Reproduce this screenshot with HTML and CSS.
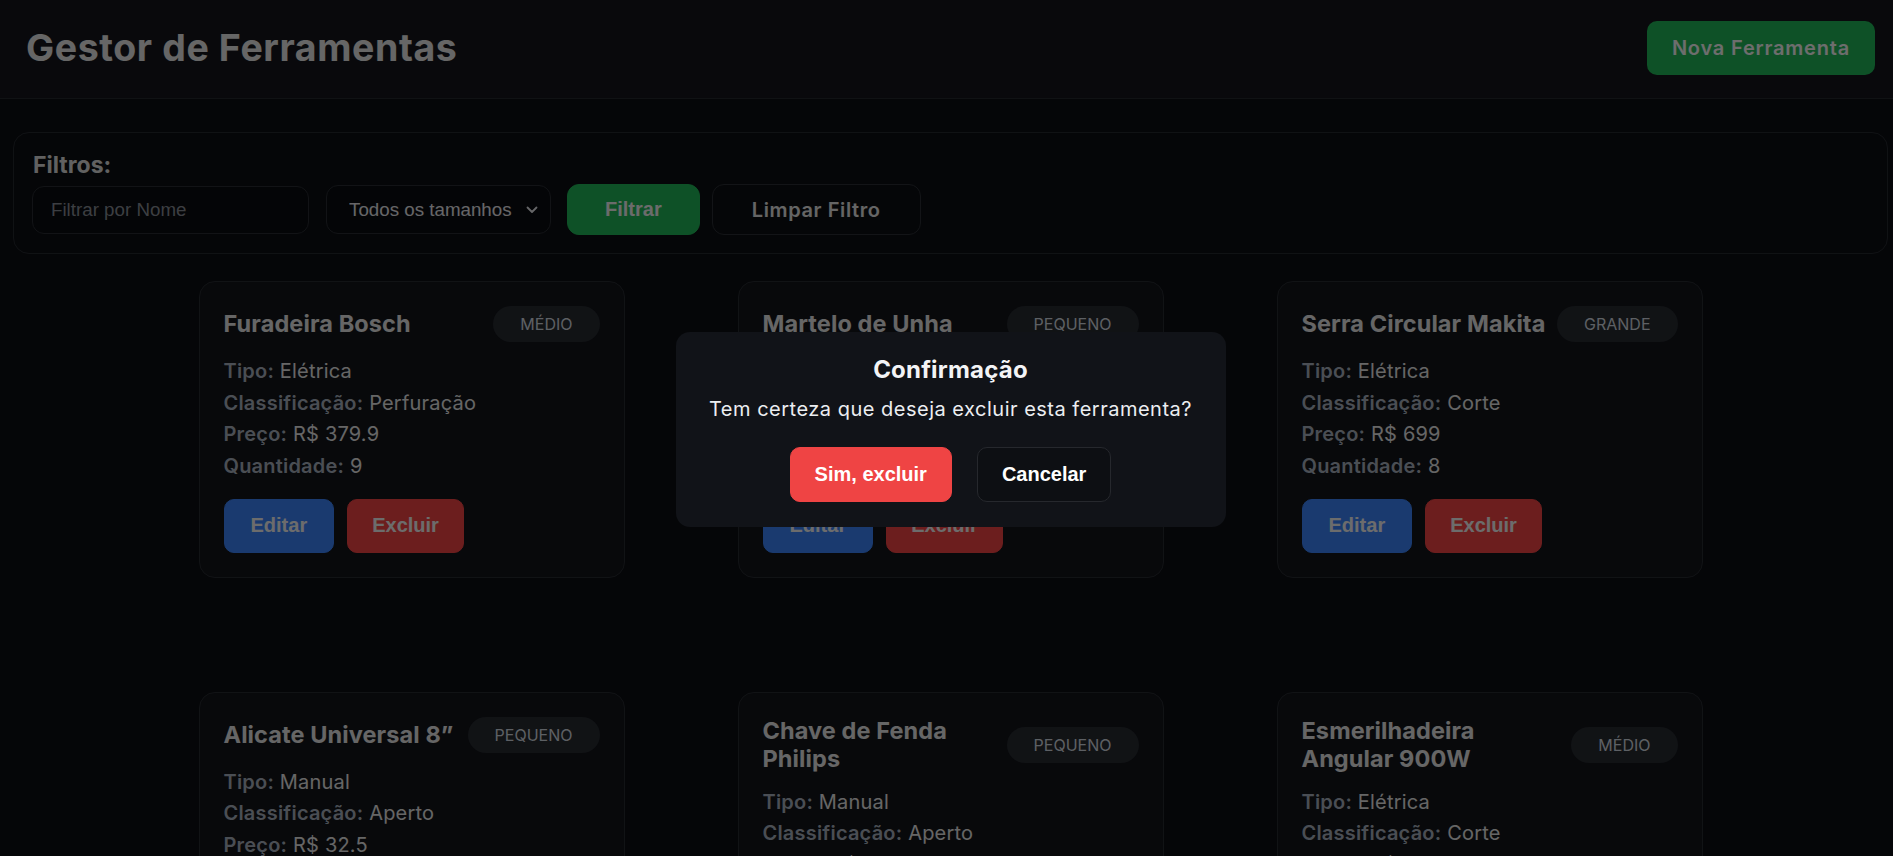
FILE: index.html
```html
<!DOCTYPE html>
<html lang="pt-BR">
<head>
<meta charset="utf-8">
<title>Gestor de Ferramentas</title>
<link rel="stylesheet" href="styles.css">
</head>
<body>
<header class="topbar">
  <h1 class="app-title">Gestor de Ferramentas</h1>
  <button class="btn-new">Nova Ferramenta</button>
</header>
<main class="main">
  <section class="filters">
    <div class="filters-label">Filtros:</div>
    <div class="filters-row">
      <input class="f-input" type="text" placeholder="Filtrar por Nome">
      <div class="f-select-wrap">
        <select class="f-select">
          <option>Todos os tamanhos</option>
          <option>Pequeno</option>
          <option>Médio</option>
          <option>Grande</option>
        </select>
        <svg class="f-chevron" width="12" height="8" viewBox="0 0 12 8"><path d="M1.5 1.5 L6 6 L10.5 1.5" fill="none" stroke="#e2e2e6" stroke-width="1.8" stroke-linecap="round" stroke-linejoin="round"/></svg>
      </div>
      <button class="btn-filter">Filtrar</button>
      <button class="btn-clear">Limpar Filtro</button>
    </div>
  </section>

  <section class="grid">
    <article class="card">
      <div class="card-head"><h2 class="card-title">Furadeira Bosch</h2><span class="badge">Médio</span></div>
      <p class="line"><b>Tipo:</b> Elétrica</p>
      <p class="line"><b>Classificação:</b> Perfuração</p>
      <p class="line"><b>Preço:</b> R$ 379.9</p>
      <p class="line"><b>Quantidade:</b> 9</p>
      <div class="actions"><button class="btn btn-edit">Editar</button><button class="btn btn-del">Excluir</button></div>
    </article>
    <article class="card">
      <div class="card-head"><h2 class="card-title">Martelo de Unha</h2><span class="badge">Pequeno</span></div>
      <p class="line"><b>Tipo:</b> Manual</p>
      <p class="line"><b>Classificação:</b> Impacto</p>
      <p class="line"><b>Preço:</b> R$ 45.9</p>
      <p class="line"><b>Quantidade:</b> 15</p>
      <div class="actions"><button class="btn btn-edit">Editar</button><button class="btn btn-del">Excluir</button></div>
    </article>
    <article class="card">
      <div class="card-head"><h2 class="card-title">Serra Circular Makita</h2><span class="badge">Grande</span></div>
      <p class="line"><b>Tipo:</b> Elétrica</p>
      <p class="line"><b>Classificação:</b> Corte</p>
      <p class="line"><b>Preço:</b> R$ 699</p>
      <p class="line"><b>Quantidade:</b> 8</p>
      <div class="actions"><button class="btn btn-edit">Editar</button><button class="btn btn-del">Excluir</button></div>
    </article>
    <article class="card">
      <div class="card-head"><h2 class="card-title">Alicate Universal 8”</h2><span class="badge">Pequeno</span></div>
      <p class="line"><b>Tipo:</b> Manual</p>
      <p class="line"><b>Classificação:</b> Aperto</p>
      <p class="line"><b>Preço:</b> R$ 32.5</p>
      <p class="line"><b>Quantidade:</b> 20</p>
      <div class="actions"><button class="btn btn-edit">Editar</button><button class="btn btn-del">Excluir</button></div>
    </article>
    <article class="card">
      <div class="card-head"><h2 class="card-title">Chave de Fenda Philips</h2><span class="badge">Pequeno</span></div>
      <p class="line"><b>Tipo:</b> Manual</p>
      <p class="line"><b>Classificação:</b> Aperto</p>
      <p class="line"><b>Preço:</b> R$ 18.9</p>
      <p class="line"><b>Quantidade:</b> 30</p>
      <div class="actions"><button class="btn btn-edit">Editar</button><button class="btn btn-del">Excluir</button></div>
    </article>
    <article class="card">
      <div class="card-head"><h2 class="card-title">Esmerilhadeira Angular 900W</h2><span class="badge">Médio</span></div>
      <p class="line"><b>Tipo:</b> Elétrica</p>
      <p class="line"><b>Classificação:</b> Corte</p>
      <p class="line"><b>Preço:</b> R$ 289.9</p>
      <p class="line"><b>Quantidade:</b> 6</p>
      <div class="actions"><button class="btn btn-edit">Editar</button><button class="btn btn-del">Excluir</button></div>
    </article>
  </section>
</main>

<div class="overlay">
  <div class="modal">
    <h3 class="modal-title">Confirmação</h3>
    <p class="modal-text">Tem certeza que deseja excluir esta ferramenta?</p>
    <div class="modal-actions">
      <button class="m-btn m-yes">Sim, excluir</button>
      <button class="m-btn m-no">Cancelar</button>
    </div>
  </div>
</div>
</body>
</html>
```

FILE: styles.css
```css
* { box-sizing: border-box; }

html, body {
  margin: 0;
  padding: 0;
  background: #0c0e12;
  font-family: "Inter", "Noto Sans", sans-serif;
  color: #e4e4e4;
  overflow: hidden;
  height: 100%;
}

.topbar {
  height: 99px;
  display: flex;
  align-items: center;
  justify-content: space-between;
  padding: 0 18px 3px 26px;
  background: #14161b;
  border-bottom: 1px solid #25282e;
}

.app-title {
  margin: 0;
  font-size: 37.5px;
  font-weight: 700;
  line-height: 1.2;
  color: #e2e2e2;
  letter-spacing: 0.6px;
}

.btn-new {
  height: 54px;
  padding: 0 25px;
  border: 0;
  border-radius: 10px;
  background: #21b457;
  color: #f2f2f2;
  font-family: "Inter", sans-serif;
  font-weight: 600;
  font-size: 20px;
  letter-spacing: 0.8px;
}

.main {
  padding: 33px 5px 0 13px;
}

.filters {
  border: 1px solid #25282e;
  border-radius: 16px;
  padding: 18px;
}

.filters-label {
  font-size: 23px;
  font-weight: 700;
  line-height: 28px;
  color: #d8d8d8;
  margin: 0 0 5px 1px;
}

.filters-row {
  display: flex;
  align-items: center;
}

.f-input {
  width: 277px;
  height: 48px;
  margin-right: 17px;
  padding: 0 18px;
  border: 1px solid #282b31;
  border-radius: 12px;
  background: #0a0c10;
  color: #e0e0e0;
  font-family: "Liberation Sans", Arial, sans-serif;
  font-size: 18.75px;
  outline: none;
}
.f-input::placeholder { color: #868b93; }

.f-select-wrap {
  position: relative;
  margin-right: 16px;
}

.f-select {
  width: 225px;
  height: 49px;
  padding: 0 0 0 22px;
  border: 1px solid #282b31;
  border-radius: 12px;
  background: #0a0c10;
  color: #e2e2e6;
  font-family: "Liberation Sans", Arial, sans-serif;
  font-size: 18.75px;
  appearance: none;
  -webkit-appearance: none;
  outline: none;
}

.f-chevron {
  position: absolute;
  right: 13px;
  top: 21px;
  pointer-events: none;
}

.btn-filter {
  height: 51px;
  padding: 0 37px;
  border: 1px solid #21b457;
  border-radius: 12px;
  background: #21b457;
  color: #ededed;
  font-family: "Liberation Sans", Arial, sans-serif;
  font-weight: 700;
  font-size: 20px;
  margin-right: 12px;
}

.btn-clear {
  height: 51px;
  width: 209px;
  padding: 0;
  border: 1px solid #2a2d33;
  border-radius: 12px;
  background: transparent;
  color: #e0e0e0;
  font-family: "Inter", sans-serif;
  font-weight: 600;
  font-size: 20px;
  letter-spacing: 0.6px;
}

.grid {
  margin-top: 27px;
  display: grid;
  grid-template-columns: repeat(3, 426px);
  column-gap: 113px;
  row-gap: 114px;
  justify-content: center;
}

.card {
  border: 1px solid #272a30;
  border-radius: 16px;
  background: #121419;
  padding: 24px;
}

.card-head {
  display: flex;
  align-items: center;
  justify-content: space-between;
  gap: 8px;
  margin-bottom: 14px;
}

.card-title {
  margin: 0;
  font-size: 23.5px;
  font-weight: 700;
  line-height: 28px;
  color: #e2e2e2;
  letter-spacing: 0.1px;
}

.badge {
  flex-shrink: 0;
  height: 36px;
  padding: 0 27px;
  border-radius: 18px;
  background: #262a30;
  color: #cfd5dd;
  font-size: 16px;
  text-transform: uppercase;
  display: inline-flex;
  align-items: center;
}

.line {
  margin: 0;
  font-size: 20px;
  line-height: 31.67px;
  color: #e2e2e2;
  letter-spacing: 0.2px;
}
.line b {
  font-weight: 600;
  color: #a5adba;
}

.actions {
  margin-top: 16px;
  display: flex;
  gap: 13px;
}

.btn {
  height: 54px;
  padding: 0 24px;
  border: 1px solid transparent;
  border-radius: 10px;
  color: #f0f0f0;
  font-family: "Liberation Sans", Arial, sans-serif;
  font-weight: 700;
  font-size: 20px;
}
.btn-edit { background: #3b82f6; border-color: #3b82f6; padding: 0 26px; }
.btn-del { background: #ef4444; border-color: #ef4444; }

.overlay {
  position: fixed;
  inset: 0;
  background: rgba(0, 0, 0, 0.55);
  display: flex;
  align-items: center;
  justify-content: center;
  padding: 3px 0 0 8px;
}

.modal {
  width: 550px;
  padding: 24px 20px 25px;
  border-radius: 14px;
  background: #111318;
  text-align: center;
}

.modal-title {
  margin: 0 0 12px;
  font-size: 24px;
  font-weight: 700;
  line-height: 28.8px;
  color: #f3f4f6;
  letter-spacing: 0.2px;
}

.modal-text {
  margin: 0 0 26px;
  font-size: 20px;
  line-height: 24px;
  color: #eceef1;
  letter-spacing: 0.5px;
}

.modal-actions {
  display: flex;
  justify-content: center;
  gap: 25px;
}

.m-btn {
  height: 55px;
  padding: 0 24px;
  border: 1px solid transparent;
  border-radius: 10px;
  color: #ffffff;
  font-family: "Liberation Sans", Arial, sans-serif;
  font-weight: 700;
  font-size: 20px;
}
.m-yes { background: #ef4444; border-color: #ef4444; }
.m-no { background: #0d0f13; border-color: #26282d; }
```
